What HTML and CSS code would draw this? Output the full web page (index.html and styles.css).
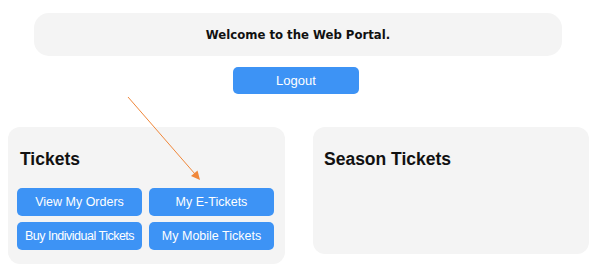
FILE: index.html
```html
<!DOCTYPE html>
<html lang="en">
<head>
  <meta charset="UTF-8">
  <meta name="viewport" content="width=device-width, initial-scale=1.0">
  <title>Web Portal</title>
  <link rel="stylesheet" href="styles.css">
</head>
<body>
  <div id="top">
    <div class="banner">Welcome to the Web Portal.</div>
    <button class="btn logout">Logout</button>
  </div>
  <div id="panels">
    <div class="panel" id="tickets">
      <h2>Tickets</h2>
      <div class="buttons">
        <button class="btn">View My Orders</button>
        <button class="btn">My E-Tickets</button>
        <button class="btn tight">Buy Individual Tickets</button>
        <button class="btn">My Mobile Tickets</button>
      </div>
    </div>
    <div class="panel" id="season">
      <h2>Season Tickets</h2>
    </div>
  </div>
  <svg class="arrow" width="600" height="266" viewBox="0 0 600 266">
    <line x1="128" y1="97" x2="195" y2="174" stroke="#f0873a" stroke-width="1"/>
    <polygon points="191,176 197.5,170.5 200,180" fill="#f0873a"/>
  </svg>
</body>
</html>
```

FILE: styles.css
```css
* {
  box-sizing: border-box;
}
body {
  margin: 0;
  padding: 13px 8px 0;
  background: #fff;
  font-family: "Liberation Sans", Arial, sans-serif;
  color: #111;
}
#top {
  width: 528px;
  margin-left: 26px;
  display: flex;
  flex-direction: column;
  align-items: center;
}
.banner {
  width: 100%;
  height: 43px;
  border-radius: 15px;
  background: #f4f4f4;
  display: flex;
  justify-content: center;
  align-items: center;
  font-family: "DejaVu Sans Condensed", "DejaVu Sans", sans-serif;
  font-weight: bold;
  font-size: 13px;
  color: #111;
}
.btn {
  height: 28px;
  border: 0;
  border-radius: 5px;
  background: #3d93f5;
  color: #fff;
  font-family: "Liberation Sans", Arial, sans-serif;
  font-size: 12.5px;
  padding: 0;
  cursor: pointer;
}
.logout {
  width: 126px;
  height: 27px;
  margin: 11px 4px 0 0;
  font-size: 13px;
}
#panels {
  display: flex;
  align-items: flex-start;
  gap: 28px;
  margin-top: 33px;
}
.panel {
  background: #f4f4f4;
  border-radius: 12px;
}
.panel h2 {
  margin: 0;
  font-size: 17.5px;
  line-height: 20px;
  font-weight: bold;
}
#tickets {
  width: 277px;
  padding: 22px 11px 14px 9px;
}
#tickets h2 {
  margin: 0 0 19px 3px;
}
#season {
  width: 276px;
  height: 127px;
  padding: 22px 11px 0;
}
.buttons {
  display: grid;
  grid-template-columns: 125px 125px;
  column-gap: 7px;
  row-gap: 6px;
}
.tight {
  letter-spacing: -0.5px;
}
.arrow {
  position: absolute;
  left: 0;
  top: 0;
  pointer-events: none;
}
```
